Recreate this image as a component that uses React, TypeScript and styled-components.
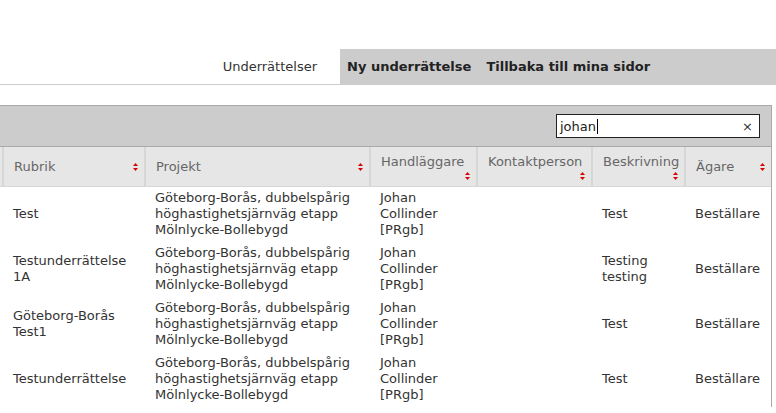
import styled, { createGlobalStyle } from 'styled-components';

const GlobalStyle = createGlobalStyle`
    body {
        margin: 0;
        background: #ffffff;
        font-family: 'DejaVu Sans', Verdana, sans-serif;
        font-size: 13px;
        color: #333333;
    }
`;

const Page = styled.div`
    width: 776px;
    padding-top: 49px;
`;

const Nav = styled.nav`
    display: flex;
    justify-content: flex-end;
    height: 35px;
    border-bottom: 1px solid #cccccc;
`;

const NavLink = styled.a`
    display: flex;
    align-items: center;
    padding: 0 23px 0 0;
    color: #333333;
    text-decoration: none;
    font-size: 13px;
`;

const NavGroup = styled.div`
    display: flex;
    align-items: center;
    gap: 15px;
    width: 429px;
    padding-left: 7px;
    background: #cccccc;
`;

const NavBold = styled.a`
    color: #222222;
    font-weight: 700;
    font-size: 13px;
    text-decoration: none;
`;

const Panel = styled.div`
    width: 771px;
    margin-top: 20px;
    border-top: 1px solid #a9a9a9;
    border-right: 1px solid #a9a9a9;
`;

const Toolbar = styled.div`
    display: flex;
    justify-content: flex-end;
    align-items: center;
    height: 40px;
    padding-right: 11px;
    background: #cccccc;
    border-bottom: 1px solid #a9a9a9;
`;

const Search = styled.div`
    position: relative;
    display: flex;
    align-items: center;
    box-sizing: border-box;
    width: 204px;
    height: 24px;
    padding: 0 3px;
    background: #ffffff;
    border: 1px solid #222222;
    color: #222222;
`;

const Caret = styled.span`
    display: inline-block;
    width: 1px;
    height: 15px;
    margin-left: 1px;
    background: #000000;
`;

const Clear = styled.span`
    margin-left: auto;
    padding-right: 3px;
    font-size: 13px;
    color: #333333;
`;

const Table = styled.table`
    width: 771px;
    table-layout: fixed;
    border-collapse: collapse;
`;

const Th = styled.th`
    height: 39px;
    padding: 0 6px 0 10px;
    background: #e6e6e6;
    border-left: 2px solid #d6d6d6;
    border-bottom: 1px solid #d6d6d6;
    color: #666666;
    font-weight: 400;
    text-align: left;
    vertical-align: middle;
    &:first-child {
        border-left: none;
        padding: 0;
    }
`;

const HeadInner = styled.div<{ $stacked?: boolean }>`
    display: flex;
    flex-direction: ${(p) => (p.$stacked ? 'column' : 'row')};
    align-items: ${(p) => (p.$stacked ? 'stretch' : 'center')};
    justify-content: space-between;
    & > svg {
        align-self: ${(p) => (p.$stacked ? 'flex-end' : 'center')};
        margin-top: ${(p) => (p.$stacked ? '3px' : '0')};
    }
`;

const Td = styled.td`
    padding: 3px 6px 4px 10px;
    line-height: 16px;
    vertical-align: middle;
    color: #333333;
    &:first-child {
        padding: 0;
    }
`;

const SortIcon = () => (
    <svg width="5" height="8" viewBox="0 0 5 8">
        <path d="M2.5 0 L5 3 L0 3 Z" fill="#dd0000" />
        <path d="M0 5 L5 5 L2.5 8 Z" fill="#dd0000" />
    </svg>
);

const columns = [
    { title: 'Rubrik', stacked: false },
    { title: 'Projekt', stacked: false },
    { title: 'Handläggare', stacked: true },
    { title: 'Kontaktperson', stacked: true },
    { title: 'Beskrivning', stacked: true },
    { title: 'Ägare', stacked: false },
];

const widths = [3, 142, 225, 107, 115, 93, 86];

const projekt = (
    <>
        Göteborg-Borås, dubbelspårig
        <br />
        höghastighetsjärnväg etapp
        <br />
        Mölnlycke-Bollebygd
    </>
);

const handlaggare = (
    <>
        Johan
        <br />
        Collinder
        <br />
        [PRgb]
    </>
);

const rows = [
    { rubrik: <>Test</>, beskrivning: <>Test</> },
    {
        rubrik: (
            <>
                Testunderrättelse
                <br />
                1A
            </>
        ),
        beskrivning: (
            <>
                Testing
                <br />
                testing
            </>
        ),
    },
    {
        rubrik: (
            <>
                Göteborg-Borås
                <br />
                Test1
            </>
        ),
        beskrivning: <>Test</>,
    },
    { rubrik: <>Testunderrättelse</>, beskrivning: <>Test</> },
];

const App = () => {
    return (
        <>
            <GlobalStyle />
            <Page>
                <Nav>
                    <NavLink href="#">Underrättelser</NavLink>
                    <NavGroup>
                        <NavBold href="#">Ny underrättelse</NavBold>
                        <NavBold href="#">Tillbaka till mina sidor</NavBold>
                    </NavGroup>
                </Nav>
                <Panel>
                    <Toolbar>
                        <Search>
                            johan
                            <Caret />
                            <Clear>×</Clear>
                        </Search>
                    </Toolbar>
                    <Table>
                        <colgroup>
                            {widths.map((w, i) => (
                                <col key={i} style={{ width: w }} />
                            ))}
                        </colgroup>
                        <thead>
                            <tr>
                                <Th />
                                {columns.map((c) => (
                                    <Th key={c.title}>
                                        <HeadInner $stacked={c.stacked}>
                                            <span>{c.title}</span>
                                            <SortIcon />
                                        </HeadInner>
                                    </Th>
                                ))}
                            </tr>
                        </thead>
                        <tbody>
                            {rows.map((r, i) => (
                                <tr key={i}>
                                    <Td />
                                    <Td>{r.rubrik}</Td>
                                    <Td>{projekt}</Td>
                                    <Td>{handlaggare}</Td>
                                    <Td />
                                    <Td>{r.beskrivning}</Td>
                                    <Td>Beställare</Td>
                                </tr>
                            ))}
                        </tbody>
                    </Table>
                </Panel>
            </Page>
        </>
    );
};

export default App;
